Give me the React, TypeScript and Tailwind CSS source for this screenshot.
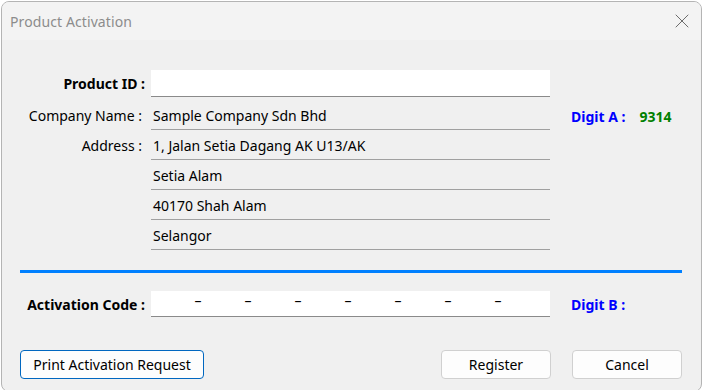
import { X } from "lucide-react";

const address = ["1, Jalan Setia Dagang AK U13/AK", "Setia Alam", "40170 Shah Alam", "Selangor"];

function Row({ label, bold, children, side }: { label: string; bold?: boolean; children: React.ReactNode; side?: React.ReactNode }) {
  return (
    <div className="flex items-center">
      <div className={bold ? "w-[143px] text-right font-bold pr-0" : "w-[143px] text-right pr-[3px]"}>{label}</div>
      <div className="ml-[6px] w-[399px]">{children}</div>
      <div className="ml-[21px]">{side}</div>
    </div>
  );
}

export default function App() {
  return (
    <div className="w-[702px] h-[390px] bg-white overflow-hidden font-['Noto_Sans',sans-serif] text-[14px] text-black">
      <div className="ml-[1px] mt-[1px] w-[701px] h-[391px] border border-[#b4b4b4] rounded-[8px] bg-[#f0f0f0] overflow-hidden flex flex-col">
        <div className="h-[38px] bg-[#f3f3f3] flex items-center justify-between pl-[8px] pr-[7px] shrink-0">
          <span className="text-[#8c8c8c] text-[14px] tracking-[0.1px]">Product Activation</span>
          <X className="w-[24px] h-[24px] text-[#5c5c5c]" strokeWidth={0.9} />
        </div>

        <div className="pt-[30px] flex flex-col">
          <Row label="Product ID :" bold>
            <div className="h-[27px] bg-white border-b border-[#8a8a8a]" />
          </Row>

          <div className="mt-[3px]">
            <Row
              label="Company Name :"
              side={
                <div className="flex font-bold pt-[2px]">
                  <span className="text-[#0000ff]">Digit A :</span>
                  <span className="text-[#008000] ml-[14px]">9314</span>
                </div>
              }
            >
              <div className="h-[30px] border-b border-[#a0a0a0] flex items-center pl-[2px] pt-[2px]">Sample Company Sdn Bhd</div>
            </Row>
            {address.map((line, i) => (
              <Row key={i} label={i === 0 ? "Address :" : ""}>
                <div className="h-[30px] border-b border-[#a0a0a0] flex items-center pl-[2px] pt-[2px]">{line}</div>
              </Row>
            ))}
          </div>

          <div className="mt-[20px] ml-[18px] w-[662px] h-[3px] bg-[#0080ff]" />

          <div className="mt-[18px]">
            <Row label="Activation Code :" bold side={<span className="font-bold text-[#0000ff]">Digit B :</span>}>
              <div className="h-[26px] bg-white border-b border-[#8a8a8a] flex pl-[22px] pb-[6px] items-center">
                {Array.from({ length: 7 }).map((_, i) => (
                  <span key={i} className="w-[50px] text-center leading-none">–</span>
                ))}
              </div>
            </Row>
          </div>

          <div className="mt-[33px] flex pl-[18px]">
            <button className="w-[184px] h-[29px] bg-[#fdfdfd] border border-[#0067c0] rounded-[4px]">Print Activation Request</button>
            <button className="ml-[237px] w-[110px] h-[29px] bg-[#fdfdfd] border border-[#d0d0d0] rounded-[4px]">Register</button>
            <button className="ml-[21px] w-[110px] h-[29px] bg-[#fdfdfd] border border-[#d0d0d0] rounded-[4px]">Cancel</button>
          </div>
        </div>
      </div>
    </div>
  );
}
